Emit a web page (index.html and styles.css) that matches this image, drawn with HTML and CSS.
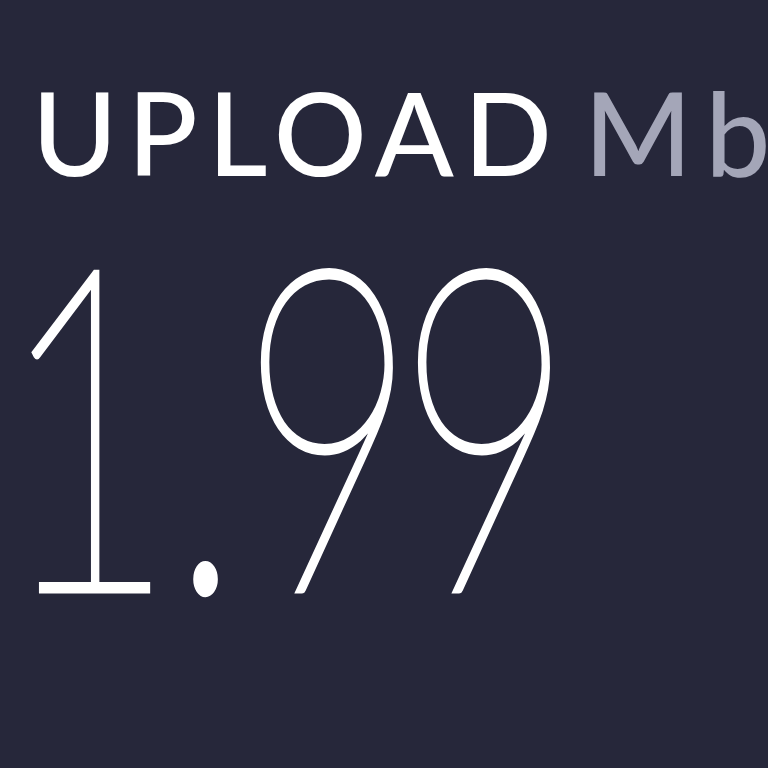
FILE: index.html
```html
<!DOCTYPE html>
<html lang="en">
<head>
    <meta charset="UTF-8">
    <meta name="viewport" content="width=device-width, initial-scale=1.0">
    <title>Upload Speed</title>
    <link rel="stylesheet" href="styles.css">
</head>
<body>

<!-- Upload speed readout -->
<div class="stat">
    <div class="stat-label">
        <span class="stat-name">UPLOAD</span>
        <span class="stat-unit">Mb</span>
    </div>
    <div class="stat-value">1<span class="stat-dot">.</span>99</div>
</div>

</body>
</html>
```

FILE: styles.css
```css
html, body {
    height: 100%;
}

body {
    margin: 0;
    background: #26273a;
    color: #ffffff;
    font-family: 'Lato', 'DejaVu Sans', sans-serif;
    overflow: hidden;
}

/* Stat block */
.stat {
    padding: 62px 0 0 32px;
    white-space: nowrap;
}

.stat-label {
    display: flex;
    gap: 22px;
    font-size: 116px;
    line-height: 140px;
    font-weight: 500;
    letter-spacing: 10px;
}

.stat-unit {
    color: #a4a6b8;
    letter-spacing: 14px;
}

/* Big number, narrowed to the condensed look of the reading */
.stat-value {
    font-size: 450px;
    line-height: 428px;
    font-weight: 100;
    -webkit-text-stroke: 7px #ffffff;
    letter-spacing: -30px;
    margin-left: -34px;
    transform: scaleX(0.68);
    transform-origin: left center;
}

.stat-dot {
    margin: 0 28px 0 22px;
}
```
